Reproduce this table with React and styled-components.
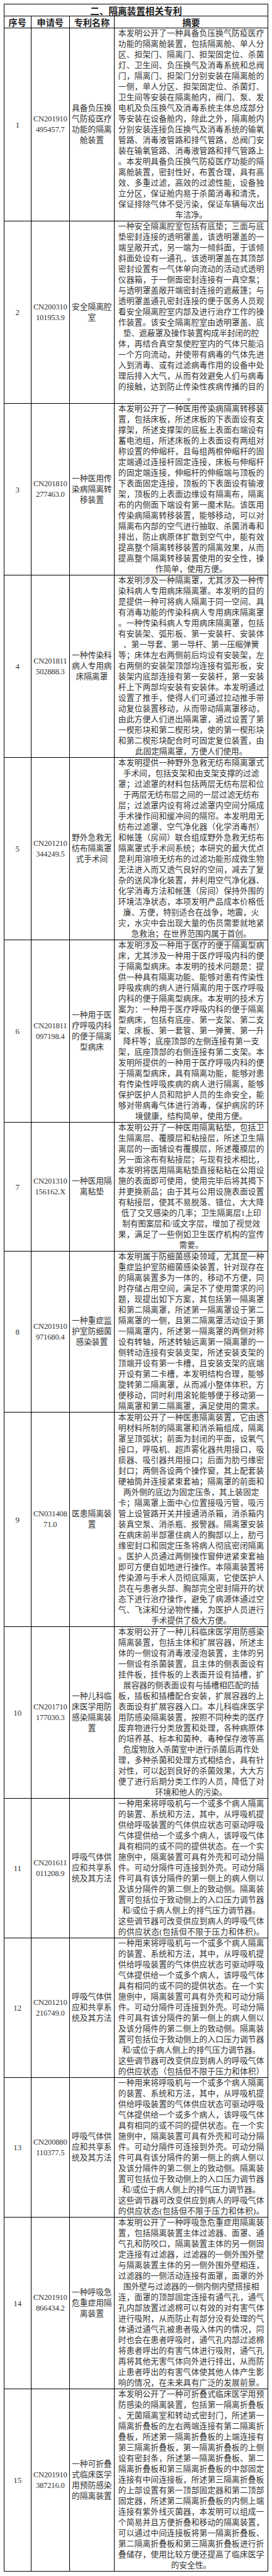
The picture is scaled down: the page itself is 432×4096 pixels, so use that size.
import React from "react";
import styled, { createGlobalStyle } from "styled-components";

const GlobalStyle = createGlobalStyle`
    html, body {
        margin: 0;
        padding: 0;
        background: #ffffff;
    }
`;

const Page = styled.div`
    padding: 6px 0 0 6px;
    font-family: "Liberation Serif", "Noto Sans CJK SC", serif;
    color: #333333;
`;

const Table = styled.table`
    width: 419.4px;
    table-layout: fixed;
    border-collapse: collapse;
    border: 1px solid #000000;
`;

const TitleCell = styled.th`
    height: 18px;
    padding: 0;
    border: 1px solid #000000;
    font-family: "Noto Sans CJK SC", sans-serif;
    font-weight: 700;
    font-size: 14.6px;
    line-height: 17px;
    text-align: center;
    color: #222222;
`;

const HeadCell = styled.th`
    height: 18px;
    padding: 0;
    border: 1px solid #000000;
    font-family: "Noto Sans CJK SC", sans-serif;
    font-weight: 700;
    font-size: 14.2px;
    line-height: 17px;
    text-align: center;
    color: #222222;
    white-space: nowrap;
`;

const Cell = styled.td`
    padding: 0;
    border: 1px solid #000000;
    vertical-align: middle;
    text-align: center;
    font-size: 12.7px;
    line-height: 17px;
`;

const NumCell = styled(Cell)`
    font-size: 13px;
`;

const IdCell = styled(Cell)`
    font-size: 12.6px;
    letter-spacing: -0.2px;
`;

const NameCell = styled(Cell)`
    padding: 0 2px;
`;

const AbstractCell = styled(Cell)`
    padding: 0 6px;
`;

const Line = styled.div`
    text-align: ${(p) => (p.$center ? "center" : "justify")};
    text-align-last: ${(p) => (p.$center ? "center" : "justify")};
`;

const ROWS = [
    {
        num: "1",
        id: ["CN201910", "495457.7"],
        name: ["具备负压换", "气防疫医疗", "功能的隔离", "舱装置"],
        text: [
            "本发明公开了一种具备负压换气防疫医疗",
            "功能的隔离舱装置，包括隔离舱、单人分",
            "区、担架门、隔离门、担架固定位、杀菌",
            "灯、卫生间、负压换气及消毒系统和总阀",
            "门，隔离门、担架门分别安装在隔离舱的",
            "一侧，单人分区、担架固定位、杀菌灯、",
            "卫生间等安装在隔离舱内，阀门、泵、发",
            "电机及负压换气及消毒系统主体总成部分",
            "等安装在设备舱内，除此之外，隔离舱内",
            "分别安装连接负压换气及消毒系统的输氧",
            "管路、消毒液管路和排气管路，总阀门安",
            "装在输氧管路、消毒液管路和排气管路上",
            "。本发明具备负压换气防疫医疗功能的隔",
            "离舱装置，密封性好，布置合理，具有高",
            "效、多重过滤，高效的过滤性能，设备独",
            "立分区，保证舱内易于杀菌消毒和清洗，",
            "保证排除气体不受污染，保证车辆每次出",
            "^车洁净。",
        ],
    },
    {
        num: "2",
        id: ["CN200310", "101953.9"],
        name: ["安全隔离腔", "室"],
        text: [
            "一种安全隔离腔室包括有底垫；三面与底",
            "垫密封连接的透明罩盖，该透明罩盖的一",
            "端呈敞开式，另一端为一倾斜面，于该倾",
            "斜面处设有一通孔，该透明罩盖在其顶部",
            "密封设置有一气体单向流动的活动式透明",
            "仪器箱，于一侧面密封连接有一真空泵；",
            "与透明罩盖敞开端密封连接的遮蔽篷；与",
            "透明罩盖通孔密封连接的便于医务人员观",
            "看安全隔离腔室内部及进行治疗工作的操",
            "作装置。该安全隔离腔室由透明罩盖、底",
            "^垫、遮蔽罩及操作装置构成半封闭的腔",
            "体，再结合真空泵使腔室内的气体只能沿",
            "一个方向流动，并使带有病毒的气体先进",
            "入到消毒、或有过滤病毒作用的设备中处",
            "理后排入大气，从而有效避免人们与病毒",
            "的接触，达到防止传染性疾病传播的目的",
            "^。",
        ],
    },
    {
        num: "3",
        id: ["CN201810", "277463.0"],
        name: ["一种医用传", "染病隔离转", "移装置"],
        text: [
            "本发明公开了一种医用传染病隔离转移装",
            "置，包括床板，所述床板的下表面设有支",
            "撑架，所述支撑架的底板上表面右端设有",
            "蓄电池组，所述床板的上表面设有两组对",
            "称设置的伸缩杆，且每组两根伸缩杆的固",
            "定端通过连接杆固定连接，床板与伸缩杆",
            "的固定端连接，伸缩杆的伸缩端与顶板的",
            "下表面固定连接，顶板的下表面设有输液",
            "架，顶板的上表面边缘设有隔离布，隔离",
            "布的内侧面下端设有第一魔术贴。该医用",
            "传染病隔离转移装置，能够移动，可以对",
            "隔离布内部的空气进行抽取、杀菌消毒和",
            "排出，防止病原体扩散到空气中，能有效",
            "提高整个隔离转移装置的隔离效果，从而",
            "提高整个隔离转移装置使用的安全性，操",
            "^作简单，使用方便。",
        ],
    },
    {
        num: "4",
        id: ["CN201811", "502888.3"],
        name: ["一种传染科", "病人专用病", "床隔离罩"],
        text: [
            "本发明涉及一种隔离罩，尤其涉及一种传",
            "染科病人专用病床隔离罩。本发明的目的",
            "是提供一种可将病人隔离于同一空间、具",
            "有消毒功能的传染科病人专用病床隔离罩",
            "。一种传染科病人专用病床隔离罩，包括",
            "有安装架、弧形板、第一安装杆、安装体",
            "^、第一导套、第一导杆、第一压缩弹簧",
            "等；床体左右两侧前后均设有安装架，左",
            "右两侧的安装架顶部均连接有弧形板，安",
            "装架内底部连接有第一安装杆，第一安装",
            "杆上下两部均安装有安装体。本发明通过",
            "设置了推手，使得人们可通过拉动推手带",
            "动复位装置移动，从而带动隔离罩移动，",
            "由此方便人们进出隔离罩，通过设置了第",
            "一楔形块和第二楔形块，使的第一楔形块",
            "和第二楔形块配合时可固定复位装置，由",
            "^此固定隔离罩，方便人们使用。",
        ],
    },
    {
        num: "5",
        id: ["CN201210", "344249.5"],
        name: ["野外急救无", "纺布隔离罩", "式手术间"],
        text: [
            "本发明提供一种野外急救无纺布隔离罩式",
            "^手术间，包括支架和由支架支撑的过滤",
            "罩；过滤罩的材料包括两层无纺布层和位",
            "^于两层无纺布层之间的一层过滤无纺布",
            "层；过滤罩内设有将过滤罩内空间分隔成",
            "手术操作间和缓冲间的隔帘。本发明用无",
            "纺布过滤罩、空气净化器（化学消毒剂）",
            "和帐篷（房间）联合组成野外急救无纺布",
            "隔离罩式手术间系统；本研究的最大优点",
            "是利用溶喷无纺布的过滤功能形成微生物",
            "无法进入而又透气良好的空间，减去了复",
            "杂的送风净化装置，并利用空气净化器、",
            "化学消毒方法和帐篷（房间）保持外围的",
            "环境洁净状态，本项发明产品成本价格低",
            "^廉、方便，特别适合在战争，地震，火",
            "灾，水灾中会出现大量的伤员需要就地紧",
            "^急救治；在世界范围内属于首创。",
        ],
    },
    {
        num: "6",
        id: ["CN201811", "097198.4"],
        name: ["一种用于医", "疗呼吸内科", "的便于隔离", "型病床"],
        text: [
            "本发明涉及一种用于医疗的便于隔离型病",
            "床，尤其涉及一种用于医疗呼吸内科的便",
            "于隔离型病床。本发明的技术问题是：提",
            "供一种具有隔离功能、能够对患有传染性",
            "呼吸疾病的病人进行隔离的用于医疗呼吸",
            "内科的便于隔离型病床。本发明的技术方",
            "案为：一种用于医疗呼吸内科的便于隔离",
            "型病床，包括有底座、第一支架、第二支",
            "架、床板、第一套管、第一弹簧、第一升",
            "^降杆等；底座顶部的左侧连接有第一支",
            "架，底座顶部的右侧连接有第二支架。本",
            "发明所提供的一种用于医疗呼吸内科的便",
            "于隔离型病床，具有隔离功能，能够对患",
            "有传染性呼吸疾病的病人进行隔离，能够",
            "保护医护人员和陪护人员的生命安全，能",
            "够对带病毒气体进行消毒，保护病房的环",
            "^境健康，结构简单，使用方便。",
        ],
    },
    {
        num: "7",
        id: ["CN201310", "156162.X"],
        name: ["一种医用隔", "离粘垫"],
        text: [
            "本发明公开了一种医用隔离粘垫，包括卫",
            "生隔离层、覆膜层和粘接层，所述卫生隔",
            "离层的一面铺设有覆膜层，所述覆膜层的",
            "另一面涂布有粘接层；与现有技术相比，",
            "本发明将医用隔离粘垫直接粘粘在公用设",
            "施的表面即可使用，使用完毕后将其揭下",
            "并更换新品；由于其与公用设施表面设置",
            "有粘接层，使其不易脱落、错位，大大降",
            "^低了交叉感染的几率；卫生隔离层1上印",
            "^制有图案层和/或文字层，增加了视觉效",
            "果，满足了一些例如卫生医疗机构的宣传",
            "^需要。",
        ],
    },
    {
        num: "8",
        id: ["CN201910", "971680.4"],
        name: ["一种重症监", "护室防细菌", "感染装置"],
        text: [
            "本发明属于防细菌感染领域，尤其是一种",
            "重症监护室防细菌感染装置，针对现存在",
            "的隔离装置多为一体的，移动不方便，同",
            "时存储占用空间，满足不了使用需求的问",
            "题，现提出如下方案，其包括第一隔离罩",
            "和第二隔离罩，所述第一隔离罩设于第二",
            "隔离罩的一侧，且第二隔离罩活动设于第",
            "一隔离罩内，所述第一隔离罩的两侧对称",
            "设有转轴，所述转轴远离第一隔离罩的一",
            "侧转动连接有安装支架，所述安装支架的",
            "顶端开设有第一卡槽，且安装支架的底端",
            "开设有第二卡槽，本发明结构合理，能够",
            "旋转第二隔离罩，从而减小整体体积，方",
            "便移动，同时利用滚轮能够便于移动第一",
            "隔离罩和第二隔离罩，满足使用的需求。",
        ],
    },
    {
        num: "9",
        id: ["CN031408", "71.0"],
        name: ["医患隔离装", "置"],
        text: [
            "本发明公开了一种医患隔离装置，它由透",
            "明材料所制的隔离罩和消杀箱组成，隔离",
            "罩呈顶弧状；前面为封闭的平面，设氧气",
            "接口，呼吸机、超声雾化器共用接口，吸",
            "痰器、吸引器共用接口；后面为肋弓缘密",
            "封口；两侧各设两个操作窗，其上配套装",
            "硬袖筒并连接紧束套袖；隔离罩的前面和",
            "^两外侧的底边为固定压条，其上装固定",
            "卡；隔离罩上面中心位置接吸污管，吸污",
            "管上设管路开关并接通消杀箱，消杀箱内",
            "装真空泵、消杀瓶、报警器。隔离罩安装",
            "在病床前半部罩住病人的胸部以上，肋弓",
            "缘密封口和固定压条将病人彻底密闭隔离",
            "。医护人员通过两侧操作窗伸进紧束套袖",
            "即可方便自如地进行操作。本隔离装置将",
            "传染源与手术人员彻底隔离，它使医护人",
            "员在与患者头部、胸部完全密封隔开的状",
            "态下进行治疗操作，避免了病源体通过空",
            "气、飞沫和分泌物传播，为医护人员进行",
            "^手术提供了极大方便。",
        ],
    },
    {
        num: "10",
        id: ["CN201710", "177030.3"],
        name: ["一种儿科临", "床医学用防", "感染隔离装", "置"],
        text: [
            "本发明公开了一种儿科临床医学用防感染",
            "隔离装置，包括主体和扩展容器，所述主",
            "体的一侧设有消毒液浸泡装置，主体的另",
            "一侧设有杀菌装置，且主体的侧表面设有",
            "挂件板，挂件板的上表面开设有插槽，扩",
            "^展容器的侧表面设有与插槽相匹配的插",
            "板，插板和插槽配合安装，扩展容器的上",
            "表面设有扩展容器入口。本儿科临床医学",
            "用防感染隔离装置，按照不同种类的医疗",
            "废弃物进行分类放置和处理，各种病原体",
            "的培养基、标本和菌种、毒种保存液等高",
            "^危废物放入杀菌室中进行杀菌后再作处",
            "理，多种杀菌和处理方式相结合，具有针",
            "对性，可以起到良好的杀菌效果，大大方",
            "便了进行后期分类工作的人员，降低了对",
            "^环境和他人的污染。",
        ],
    },
];

const SHARED = [
    "一种用来将呼吸机与一个或多个病人隔离",
    "的装置、系统和方法，其中，从呼吸机提",
    "供给呼吸装置的气体供应状态可驱动呼吸",
    "气体提供给一个或多个病人，该呼吸气体",
    "具有相同的或不同的提供状态。在一个实",
    "施例中，隔离装置可具有外壳和可动分隔",
    "件。可动分隔件可连接到外壳。可动分隔",
    "件可具有该分隔件的第一侧上的病人侧以",
    "及该分隔件的第二侧上的致动侧。隔离装",
    "置可包括位于致动侧上的入口压力调节器",
    "^和/或位于病人侧上的排气压力调节器。",
    "这些调节器可改变供应到病人的呼吸气体",
];

const BREATH_NAME = ["呼吸气体供", "应和共享系", "统及其方法"];

ROWS.push(
    {
        num: "11",
        id: ["CN201611", "011208.9"],
        name: BREATH_NAME,
        text: [...SHARED, "的供应状态(包括但不限于压力和体积)。"],
    },
    {
        num: "12",
        id: ["CN201210", "216749.0"],
        name: BREATH_NAME,
        text: [...SHARED, "的供应状态（包括但不限于压力和体积）"],
    },
    {
        num: "13",
        id: ["CN200880", "110377.5"],
        name: BREATH_NAME,
        text: [...SHARED, "的供应状态(包括但不限于压力和体积)。"],
    },
    {
        num: "14",
        id: ["CN201910", "866434.2"],
        name: ["一种呼吸急", "危重症用隔", "离装置"],
        text: [
            "本发明公开了一种呼吸急危重症用隔离装",
            "置，包括隔离装置主体过滤器、面罩、通",
            "气孔和防咬口，隔离装置主体的另一侧固",
            "定连接有过滤器，过滤器的一侧外围外壁",
            "与隔离装置主体的另一侧外围外壁相连，",
            "过滤器的一侧活动连接有面罩，面罩的外",
            "^围外壁与过滤器的一侧内侧内壁搭接相",
            "连，面罩的顶部固定连接有通气孔，通气",
            "孔内部放置过滤棉可以有效的对有害气体",
            "进行吸附，从而防止有部分没有处理的气",
            "体通过通气孔被患者吸入体内的情况，同",
            "时也会在患者呼吸时，通气孔内部过滤棉",
            "将患者呼出的有害气体进行吸附，通气孔",
            "再将其他无害气体向外进行排出，从而防",
            "止患者呼出的有害气体使其他人体产生影",
            "响的情况，在未来具有广泛的发展前景。",
        ],
    },
    {
        num: "15",
        id: ["CN201910", "387216.0"],
        name: ["一种可折叠", "式临床医学", "用预防感染", "的隔离装置"],
        text: [
            "本发明公开了一种可折叠式临床医学用预",
            "防感染的隔离装置，包括第一隔离折叠板",
            "、无菌隔离室和转动式密封门，所述第一",
            "隔离折叠板的左右两端连接有第二隔离折",
            "叠板，所述第一隔离折叠板的上端连接有",
            "第三隔离折叠板，第一隔离折叠板的上侧",
            "设有密封条，所述第一隔离折叠板、第二",
            "隔离折叠板和第三隔离折叠板的中部固定",
            "连接有中间连接板，所述第三隔离折叠板",
            "的上部设置有第一顶部固定器和第二顶部",
            "固定器，所述第二隔离折叠板的内侧上端",
            "连接有紫外线灭菌器，本发明可以组成一",
            "个简易并且方便折叠和移动的隔离装置，",
            "可以通过中间连接板将第一隔离折叠板、",
            "第二隔离折叠板和第三隔离折叠板进行折",
            "叠储存，使用比较方便还提高了临床医学",
            "^的安全性。",
        ],
    }
);

function Lines({ items }) {
    return items.map((l, i) =>
        l.startsWith("^") ? (
            <Line key={i} $center>{l.slice(1)}</Line>
        ) : (
            <Line key={i}>{l}</Line>
        )
    );
}

function PatentRow({ row }) {
    return (
        <tr>
            <NumCell>{row.num}</NumCell>
            <IdCell>
                {row.id.map((s) => (
                    <div key={s}>{s}</div>
                ))}
            </IdCell>
            <NameCell>
                {row.name.map((s, i) => (
                    <div key={i}>{s}</div>
                ))}
            </NameCell>
            <AbstractCell>
                <Lines items={row.text} />
            </AbstractCell>
        </tr>
    );
}

export default function App() {
    return (
        <Page>
            <GlobalStyle />
            <Table>
                <colgroup>
                    <col style={{ width: "42.6px" }} />
                    <col style={{ width: "61.3px" }} />
                    <col style={{ width: "70.9px" }} />
                    <col style={{ width: "244.6px" }} />
                </colgroup>
                <thead>
                    <tr>
                        <TitleCell colSpan={4}>二、隔离装置相关专利</TitleCell>
                    </tr>
                    <tr>
                        <HeadCell>序号</HeadCell>
                        <HeadCell>申请号</HeadCell>
                        <HeadCell>专利名称</HeadCell>
                        <HeadCell>摘要</HeadCell>
                    </tr>
                </thead>
                <tbody>
                    {ROWS.map((r) => (
                        <PatentRow key={r.num} row={r} />
                    ))}
                </tbody>
            </Table>
        </Page>
    );
}
